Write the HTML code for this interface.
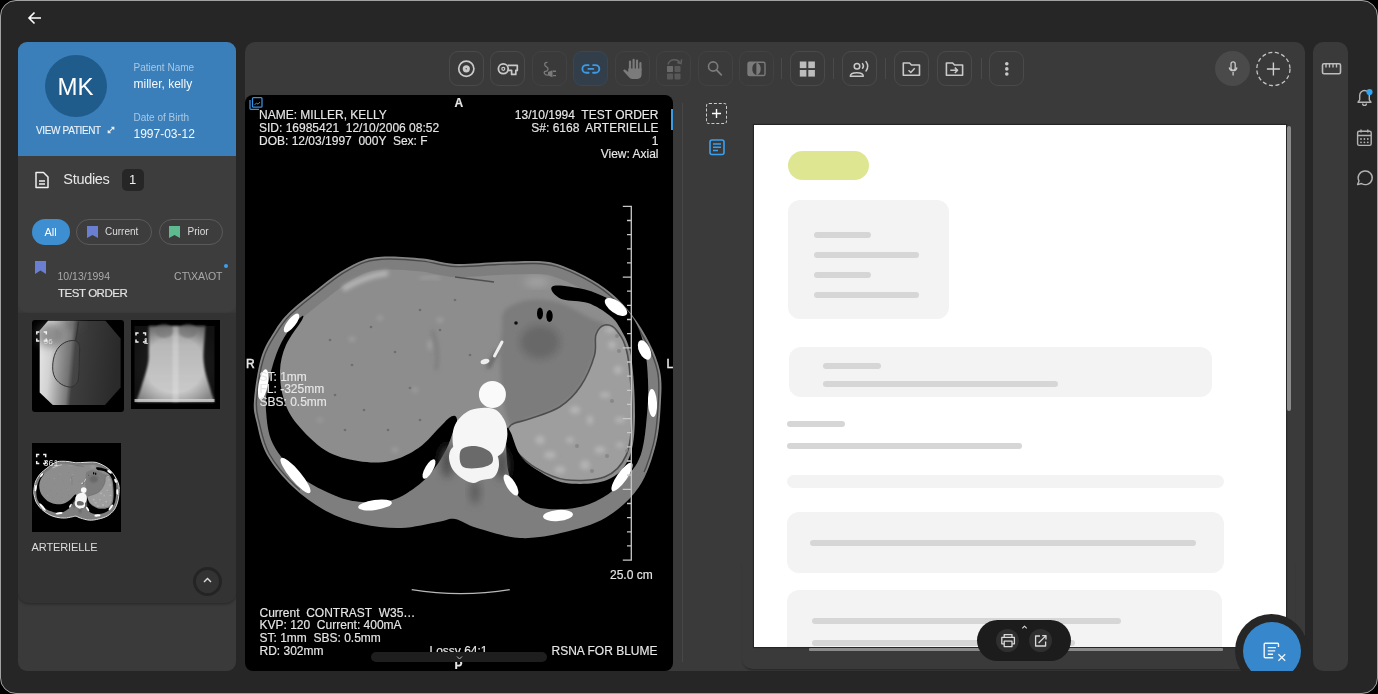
<!DOCTYPE html>
<html><head><meta charset="utf-8">
<style>
*{box-sizing:border-box;margin:0;padding:0}
html,body{width:1378px;height:694px;overflow:hidden;background:#000;font-family:"Liberation Sans",sans-serif}
body{will-change:transform}
.abs{position:absolute}
#frame{position:absolute;left:0;top:0;width:1378px;height:694px;border-radius:16px;background:#262626;border:1.5px solid #a2a2a2;overflow:hidden}
#frame2{position:absolute;left:-1.5px;top:-1.5px;width:1378px;height:694px}
.panel{position:absolute;background:#3a3a3a;border-radius:10px}
.tb{position:absolute;top:51px;width:35px;height:35px;border:1.2px solid #4a4a4a;border-radius:9px}
.sep{position:absolute;top:58px;width:1.6px;height:21px;background:#4a4a4a}
.vt{position:absolute;color:#e6e6e6;font-size:12px;line-height:12.8px;white-space:pre;-webkit-text-stroke:0.15px #e6e6e6}
.line{position:absolute;height:6px;border-radius:3px;background:#d6d6d6}
.card{position:absolute;background:#f3f3f3;border-radius:12px}
</style></head><body>
<div id="frame"><div id="frame2">

<!-- back arrow -->
<svg class="abs" style="left:26px;top:9px" width="18" height="18" viewBox="0 0 18 18"><path d="M15 9H3.5M8.5 3.5L3 9l5.5 5.5" stroke="#fff" stroke-width="1.6" fill="none"/></svg>

<!-- LEFT PANEL -->
<div class="abs" style="left:18px;top:42px;width:218px;height:629px;background:#3a3a3a;border-radius:9px;overflow:hidden">
  <div class="abs" style="left:0;top:0;width:218px;height:114px;background:#3a7fba"></div>
  <div class="abs" style="left:27px;top:13px;width:62px;height:62px;border-radius:50%;background:#1f5b8b;color:#fff;font-size:24px;text-align:center;line-height:63px">MK</div>
  <div class="abs" style="left:18.5px;top:83px;font-size:10px;color:#eef4fa;letter-spacing:-0.35px;-webkit-text-stroke:0.1px #eef4fa">VIEW PATIENT</div>
  <svg class="abs" style="left:89.5px;top:84.5px" width="8" height="8" viewBox="0 0 8 8"><path d="M1.2 6.8L6.8 1.2M4.3 1.2H6.8V3.7M1.2 4.3V6.8H3.7" stroke="#e8f0f8" stroke-width="1.1" fill="none"/></svg>
  <div class="abs" style="left:116px;top:20px;font-size:10px;color:#a9c8e3">Patient Name</div>
  <div class="abs" style="left:116px;top:35.5px;font-size:12px;color:#f4f8fb">miller, kelly</div>
  <div class="abs" style="left:116px;top:70.5px;font-size:10px;color:#a9c8e3">Date of Birth</div>
  <div class="abs" style="left:116px;top:85px;font-size:12px;color:#f4f8fb">1997-03-12</div>

  <!-- studies card -->
  <div class="abs" style="left:0;top:114px;width:218px;height:157px;background:#3d3d3d;border-radius:0 0 10px 10px"></div>
  <svg class="abs" style="left:16px;top:129px" width="16" height="18" viewBox="0 0 16 18"><path d="M2 1.5h7.5L14 6v10.5H2z" stroke="#eee" stroke-width="1.5" fill="none" stroke-linejoin="round"/><path d="M5 10h6M5 13h6" stroke="#eee" stroke-width="1.4"/></svg>
  <div class="abs" style="left:45.8px;top:129px;font-size:14.5px;letter-spacing:-0.3px;color:#e8e8e8">Studies</div>
  <div class="abs" style="left:104px;top:127px;width:22px;height:22px;border-radius:5px;background:#262626;color:#eee;font-size:13px;text-align:center;line-height:22px">1</div>

  <div class="abs" style="left:14px;top:177px;width:38px;height:26px;border-radius:13px;background:#3d8fd2;color:#fff;font-size:11px;text-align:center;line-height:26px">All</div>
  <div class="abs" style="left:58px;top:177px;width:76px;height:26px;border-radius:13px;border:1px solid #5a5a5a"></div>
  <svg class="abs" style="left:69px;top:184px" width="11" height="12" viewBox="0 0 11 12"><path d="M0 0h11v12L5.5 9 0 12z" fill="#6a7fd2"/></svg>
  <div class="abs" style="left:87.5px;top:184px;font-size:10px;color:#ddd">Current</div>
  <div class="abs" style="left:141px;top:177px;width:64px;height:26px;border-radius:13px;border:1px solid #5a5a5a"></div>
  <svg class="abs" style="left:151px;top:184px" width="11" height="12" viewBox="0 0 11 12"><path d="M0 0h11v12L5.5 9 0 12z" fill="#5dbb8f"/></svg>
  <div class="abs" style="left:170px;top:184px;font-size:10px;color:#ddd">Prior</div>

  <svg class="abs" style="left:17px;top:219px" width="11" height="13" viewBox="0 0 11 13"><path d="M0 0h11v13L5.5 9.5 0 13z" fill="#6a7fd2"/></svg>
  <div class="abs" style="left:206px;top:222px;width:4px;height:4px;border-radius:50%;background:#3aa0f0"></div>
  <div class="abs" style="left:40px;top:228px;font-size:10.5px;color:#aaa">10/13/1994</div>
  <div class="abs" style="left:150px;top:228px;width:55px;text-align:right;font-size:10.5px;color:#aaa">CT\XA\OT</div>
  <div class="abs" style="left:40.5px;top:245.5px;font-size:11.5px;color:#e4e4e4;letter-spacing:-0.45px;-webkit-text-stroke:0.15px #e4e4e4">TEST ORDER</div>

  <!-- thumbnails section -->
  <div class="abs" style="left:0;top:271px;width:218px;height:290px;background:#333333;border-radius:0 0 10px 10px;box-shadow:0 1px 3px rgba(0,0,0,.35)"></div>
  <div id="th1" class="abs" style="left:14px;top:278px;width:92px;height:92px;background:#000;border-radius:3px;overflow:hidden"><svg class="abs" style="left:0;top:0" width="92" height="92" viewBox="32 320 92 92">
<defs><linearGradient id="g1" x1="0" y1="0" x2="1" y2="0.1"><stop offset="0" stop-color="#e8e8e8"/><stop offset="0.17" stop-color="#d2d2d2"/><stop offset="0.3" stop-color="#a2a2a2"/><stop offset="0.41" stop-color="#7a7a7a"/><stop offset="0.47" stop-color="#3e3e3e"/><stop offset="1" stop-color="#2a2a2a"/></linearGradient>
<filter id="tb1"><feGaussianBlur stdDeviation="0.45"/></filter><filter id="tb3" x="-50%" y="-50%" width="200%" height="200%"><feGaussianBlur stdDeviation="4"/></filter></defs>
<path d="M48,320.8 H105.5 L120.6,338.5 V387.5 L105,405 H52.8 L39.7,392.5 V330.5 Z" fill="url(#g1)"/>
<ellipse cx="50" cy="335" rx="14" ry="12" fill="#555" fill-opacity="0.55" filter="url(#tb3)"/><ellipse cx="72" cy="324" rx="12" ry="5" fill="#555" fill-opacity="0.4" filter="url(#tb3)"/><path d="M61,345 C66,341 71,340 75.6,340.8 C79,342 80,346 79.5,352 C79,362 79.5,376 77.7,381.6 C75,386 72,387.5 69,387 C62,386 54,381 52.8,370.6 C52,360 55,350 61,345 Z M75.6,340.8 C77,334 78,328 78.4,322" fill="#606060" fill-opacity="0.25" stroke="#303030" stroke-width="1" filter="url(#tb1)"/>
<path d="M36.8,334.6 V332 H39.4 M43.699999999999996,332 H46.3 V334.6 M36.8,338.4 V341 H39.4 M46.3,338.4 V341 H43.699999999999996" stroke="#f2f2f2" stroke-width="1.5" fill="none"/>
<text x="43.8" y="343.6" font-family="Liberation Sans" font-size="8" fill="#ddd">96</text>
</svg></div>
  <div id="th2" class="abs" style="left:113px;top:278px;width:89px;height:89px;background:#000;overflow:hidden"><svg class="abs" style="left:0;top:0" width="89" height="89" viewBox="131 320 89 89">
<defs><linearGradient id="g2" x1="0" y1="0" x2="1" y2="0"><stop offset="0" stop-color="#8a8a8a"/><stop offset="0.3" stop-color="#c8c8c8"/><stop offset="0.5" stop-color="#e4e4e4"/><stop offset="0.7" stop-color="#c8c8c8"/><stop offset="1" stop-color="#8a8a8a"/></linearGradient>
<filter id="tb2"><feGaussianBlur stdDeviation="1.2"/></filter></defs>
<rect x="134.5" y="326" width="80" height="77" fill="#1a1a1a"/>
<defs><linearGradient id="g2v" x1="0" y1="0" x2="0" y2="1"><stop offset="0" stop-color="#959595"/><stop offset="0.25" stop-color="#b8b8b8"/><stop offset="1" stop-color="#cdcdcd"/></linearGradient>
<radialGradient id="g2s" cx="0.5" cy="0.5" r="0.6"><stop offset="0.6" stop-color="#000" stop-opacity="0"/><stop offset="1" stop-color="#000" stop-opacity="0.35"/></radialGradient></defs>
<path d="M148.7,326.3 H205.5 C204.5,340 203.4,350 203.4,358 C204,370 207,378 210,388 C212,395 213.5,399 214.4,401.7 H136.3 C137,399 139,394 141,388 C144,378 148,368 148.7,358 C148.7,350 148.7,340 148.7,326.3 Z" fill="url(#g2v)" filter="url(#tb2)"/>
<rect x="134" y="326" width="81" height="77" fill="url(#g2s)"/>
<rect x="172.5" y="326" width="6" height="76" fill="#eee" opacity="0.3" filter="url(#tb2)"/><ellipse cx="164" cy="331" rx="9" ry="7" fill="#707070" opacity="0.55" filter="url(#tb2)"/><ellipse cx="188" cy="331" rx="9" ry="7" fill="#707070" opacity="0.55" filter="url(#tb2)"/>
<rect x="134.5" y="399" width="80" height="3" fill="#ddd" opacity="0.7"/>
<path d="M136,335.6 V333 H138.6 M142.9,333 H145.5 V335.6 M136,339.4 V342 H138.6 M145.5,339.4 V342 H142.9" stroke="#f2f2f2" stroke-width="1.5" fill="none"/>
<text x="143.5" y="344" font-family="Liberation Sans" font-size="9" fill="#ddd">1</text>
</svg></div>
  <div id="th3" class="abs" style="left:14px;top:401px;width:89px;height:89px;background:#000;overflow:hidden"><svg class="abs" style="left:0;top:0" width="89" height="89" viewBox="245.4 169.5 425 425"><use href="#ctg"/><!--TH3RING--><path d="M254.0,400.0C253.2,410.7 254.3,412.8 256.5,422.0C258.7,431.2 260.9,444.2 267.0,455.0C273.1,465.8 283.2,477.7 293.0,487.0C302.8,496.3 314.5,504.8 326.0,511.0C337.5,517.2 349.5,521.2 362.0,524.0C374.5,526.8 388.3,528.3 401.0,528.0C413.7,527.7 429.0,523.5 438.0,522.0C447.0,520.5 448.5,518.0 455.0,519.0C461.5,520.0 466.2,524.8 477.0,528.0C487.8,531.2 505.7,537.2 520.0,538.0C534.3,538.8 548.7,536.0 563.0,532.6C577.3,529.2 593.3,525.1 606.0,517.5C618.7,509.9 630.7,499.2 639.0,487.0C647.3,474.8 652.3,458.5 656.0,444.0C659.7,429.5 660.3,412.2 661.0,400.0C661.7,387.8 661.9,380.5 660.0,371.0C658.1,361.5 654.2,352.3 649.5,343.0C644.8,333.7 638.4,323.3 632.0,315.0C625.6,306.7 618.8,299.5 611.0,293.0C603.2,286.5 594.0,280.8 585.0,276.0C576.0,271.2 565.3,266.5 557.0,264.0C548.7,261.5 544.8,261.3 535.0,261.0C525.2,260.7 511.3,261.5 498.0,262.0C484.7,262.5 467.5,264.6 455.0,264.0C442.5,263.4 434.2,259.9 423.0,258.6C411.8,257.4 397.8,256.3 388.0,256.5C378.2,256.7 372.3,257.2 364.5,259.7C356.7,262.2 349.2,266.4 341.0,271.6C332.8,276.8 323.7,284.2 315.0,291.0C306.3,297.8 295.8,305.8 289.0,312.6C282.2,319.4 278.7,324.4 274.0,332.0C269.3,339.6 264.3,346.7 261.0,358.0C257.7,369.3 254.8,389.3 254.0,400.0Z" fill="none" stroke="#e8e8e8" stroke-width="4.5"/><!--/TH3RING--></svg>
<svg class="abs" style="left:0;top:0" width="89" height="89" viewBox="32 443 89 89"><path d="M36.7,457.20000000000005 V454.6 H39.300000000000004 M43.1,454.6 H45.7 V457.20000000000005 M36.7,461.0 V463.6 H39.300000000000004 M45.7,461.0 V463.6 H43.1" stroke="#f2f2f2" stroke-width="1.5" fill="none"/><text x="43.5" y="466.3" font-family="Liberation Sans" font-size="9" fill="#ddd">361</text></svg></div>
  <div class="abs" style="left:14px;top:499.5px;font-size:11px;color:#ddd;letter-spacing:-0.1px">ARTERIELLE</div>
  <div class="abs" style="left:175px;top:525px;width:29px;height:29px;border-radius:50%;border:3px solid #242424"></div>
  <svg class="abs" style="left:185px;top:535px" width="9" height="6" viewBox="0 0 9 6"><path d="M1 5l3.5-3.5L8 5" stroke="#ddd" stroke-width="1.4" fill="none"/></svg>
</div>

<!-- RIGHT thin panel -->
<div class="panel" style="left:1313px;top:42px;width:35px;height:629px"></div>
<!-- MAIN PANEL -->
<div class="panel" style="left:245px;top:42px;width:1060px;height:629px"></div>

<!-- toolbar buttons -->
<div class="tb" style="left:449px"></div>
<div class="tb" style="left:490.5px"></div>
<div class="tb" style="left:532px;border-color:#424242"></div>
<div class="tb" style="left:573px;background:#323e49;border-color:#36475a"></div>
<div class="tb" style="left:615px;border-color:#424242"></div>
<div class="tb" style="left:656.5px;border-color:#424242"></div>
<div class="tb" style="left:698px;border-color:#424242"></div>
<div class="tb" style="left:739px;border-color:#424242"></div>
<div class="sep" style="left:781px"></div>
<div class="tb" style="left:790px"></div>
<div class="sep" style="left:833px"></div>
<div class="tb" style="left:842px"></div>
<div class="sep" style="left:885px"></div>
<div class="tb" style="left:894px"></div>
<div class="tb" style="left:937px"></div>
<div class="sep" style="left:981px"></div>
<div class="tb" style="left:989.5px"></div>

<div class="abs" style="left:1215.5px;top:51.5px;width:35px;height:35px;border-radius:50%;background:#4a4a4a"></div>
<svg class="abs" style="left:1255px;top:51px" width="37" height="37" viewBox="0 0 37 37"><circle cx="18.4" cy="18" r="16.6" fill="none" stroke="#c4c4c4" stroke-width="1.3" stroke-dasharray="4 2.6"/></svg>

<svg class="abs" style="left:0;top:0" width="1378" height="100" viewBox="0 0 1378 100">
<g fill="none" stroke="#c9c9c9" stroke-width="1.7">
<circle cx="466.3" cy="68.8" r="7.6"/>
</g>
<circle cx="466.3" cy="68.8" r="3.6" fill="#c9c9c9"/><circle cx="466.3" cy="68.8" r="0.8" fill="#555"/>
<path d="M507.8,65.4 H517.3 V70.4 H515.8 V74.4 H511.6 V70.4 H507.8" fill="none" stroke="#c9c9c9" stroke-width="1.7" stroke-linejoin="round"/>
<circle cx="503.3" cy="68.8" r="4.9" fill="none" stroke="#c9c9c9" stroke-width="1.8"/>
<circle cx="503.3" cy="68.8" r="1.5" fill="none" stroke="#c9c9c9" stroke-width="1.2"/>
<path d="M547.5,62.3 C544,62 543.8,65.5 546.5,66.8 C549,68 548.5,71.5 545,71.5 C543.5,71.5 544,75.5 548,75" fill="none" stroke="#7a7a7a" stroke-width="1.3"/>
<path d="M548,72 L552.5,70.2 V77.2 L548,75.5 Z" fill="#7a7a7a"/>
<path d="M553,71.3 H556 M553,75.6 H556" stroke="#7a7a7a" stroke-width="1.4"/>
<g fill="none" stroke="#3d9be6" stroke-width="1.9" stroke-linecap="round">
<path d="M588.6,65.1 H586.2 A3.8,3.8 0 0 0 586.2,72.7 H588.6"/>
<path d="M593.1,65.1 H595.5 A3.8,3.8 0 0 1 595.5,72.7 H593.1"/>
<path d="M588.4,68.9 H593.3"/>
</g>
<g fill="#7b7b7b"><path d="M628.2,72 L628.2,68.5 L641.6,68.5 L641.6,74.5 C641.6,77 640,78.9 637.5,78.9 H632.5 C630.8,78.9 629.8,78.2 628.8,77 L623.6,71.3 C622.8,70.3 623.8,69 625,69.6 Z"/></g>
<g stroke="#7b7b7b" stroke-width="2.2" stroke-linecap="round"><path d="M630,61.5 V70 M633.6,59.8 V70 M637,60.6 V70 M640.4,63.2 V70"/></g>
<g fill="#585858"><rect x="667" y="66" width="6" height="6" rx="0.8"/><rect x="674.5" y="66" width="6" height="6" rx="0.8"/><rect x="667" y="73.5" width="6" height="6" rx="0.8"/><rect x="674.5" y="73.5" width="6" height="6" rx="0.8"/></g>
<rect x="667" y="66" width="6" height="6" rx="0.8" fill="#6a6a6a"/>
<path d="M668,64.5 C669.5,59 677,58 680,62.5" fill="none" stroke="#5e5e5e" stroke-width="1.5"/>
<path d="M677.2,62.6 L681,63.6 L681.6,59.3" fill="none" stroke="#5e5e5e" stroke-width="1.5"/>
<circle cx="713.1" cy="66.5" r="4.6" fill="none" stroke="#7b7b7b" stroke-width="1.6"/>
<path d="M716.5,70 L721.3,74.8" stroke="#7b7b7b" stroke-width="1.8" stroke-linecap="round"/>
<rect x="748" y="62.3" width="17" height="13.2" rx="1.6" fill="none" stroke="#7b7b7b" stroke-width="1.4"/>
<path d="M748,62.3 H756.5 V75.5 H748 Z" fill="#7b7b7b"/>
<path d="M756.5,62.6 A6,6.6 0 0 0 756.5,75.2 Z" fill="#3a3a3a"/>
<path d="M756.5,62.6 A6,6.6 0 0 1 756.5,75.2 Z" fill="#7b7b7b"/>
<g fill="#bcbcbc"><rect x="799.8" y="61.5" width="6.6" height="6.6"/><rect x="808.3" y="61.5" width="6.6" height="6.6"/><rect x="799.8" y="70" width="6.6" height="6.6"/><rect x="808.3" y="70" width="6.6" height="6.6"/></g>
<g fill="none" stroke="#c9c9c9" stroke-width="1.5" stroke-linecap="round">
<circle cx="857" cy="66.3" r="2.8"/>
<path d="M850.3,76.2 C850.3,71.5 863.3,71.5 863.3,76.2 Z" stroke-linejoin="round"/>
<path d="M862.5,63.6 C863.6,65 863.6,67 862.5,68.3"/>
<path d="M866,61.6 C868.2,64.5 868.2,68 866,71"/>
</g>
<g fill="none" stroke="#c9c9c9" stroke-width="1.6" stroke-linejoin="round">
<path d="M903.3,63 H909.5 L911.5,65 H919.5 V75.2 H903.3 Z"/>
<path d="M908.5,70.3 L910.8,72.5 L914.7,68.3" stroke-width="1.5"/>
<path d="M946.4,63 H952.6 L954.6,65 H962.6 V75.2 H946.4 Z"/>
<path d="M950.3,70.3 H957.6 M954.8,67.6 L957.6,70.3 L954.8,73" stroke-width="1.5"/>
</g>
<g fill="#c9c9c9"><circle cx="1006.8" cy="63.8" r="1.8"/><circle cx="1006.8" cy="68.9" r="1.8"/><circle cx="1006.8" cy="74" r="1.8"/></g>
<rect x="1231" y="61.8" width="4.2" height="8.6" rx="2.1" fill="none" stroke="#c9c9c9" stroke-width="1.3"/>
<path d="M1229.2,67.5 a4,4 0 0 0 7.8,0 M1233.1,72 V75.5" fill="none" stroke="#c9c9c9" stroke-width="1.3"/>
<path d="M1273.4,62.5 V75.5 M1266.9,69 H1279.9" stroke="#cfcfcf" stroke-width="1.4"/>
<rect x="1322.5" y="63.8" width="18" height="10" rx="1.5" fill="none" stroke="#bdbdbd" stroke-width="1.6"/>
<path d="M1326,64 V67.5 M1329.5,64 V67.5 M1333,64 V67.5 M1336.5,64 V67.5" stroke="#bdbdbd" stroke-width="1.4"/>
</svg>
<!-- VIEWPORT -->
<div id="vp" class="abs" style="left:245px;top:95px;width:428px;height:576px;background:#000;border-radius:8px;overflow:hidden">
<!--CT_START--><svg class="abs" style="left:0;top:0" width="428" height="576" viewBox="245 95 428 576">
<defs><clipPath id="bc"><path d="M254.0,400.0C253.2,410.7 254.3,412.8 256.5,422.0C258.7,431.2 260.9,444.2 267.0,455.0C273.1,465.8 283.2,477.7 293.0,487.0C302.8,496.3 314.5,504.8 326.0,511.0C337.5,517.2 349.5,521.2 362.0,524.0C374.5,526.8 388.3,528.3 401.0,528.0C413.7,527.7 429.0,523.5 438.0,522.0C447.0,520.5 448.5,518.0 455.0,519.0C461.5,520.0 466.2,524.8 477.0,528.0C487.8,531.2 505.7,537.2 520.0,538.0C534.3,538.8 548.7,536.0 563.0,532.6C577.3,529.2 593.3,525.1 606.0,517.5C618.7,509.9 630.7,499.2 639.0,487.0C647.3,474.8 652.3,458.5 656.0,444.0C659.7,429.5 660.3,412.2 661.0,400.0C661.7,387.8 661.9,380.5 660.0,371.0C658.1,361.5 654.2,352.3 649.5,343.0C644.8,333.7 638.4,323.3 632.0,315.0C625.6,306.7 618.8,299.5 611.0,293.0C603.2,286.5 594.0,280.8 585.0,276.0C576.0,271.2 565.3,266.5 557.0,264.0C548.7,261.5 544.8,261.3 535.0,261.0C525.2,260.7 511.3,261.5 498.0,262.0C484.7,262.5 467.5,264.6 455.0,264.0C442.5,263.4 434.2,259.9 423.0,258.6C411.8,257.4 397.8,256.3 388.0,256.5C378.2,256.7 372.3,257.2 364.5,259.7C356.7,262.2 349.2,266.4 341.0,271.6C332.8,276.8 323.7,284.2 315.0,291.0C306.3,297.8 295.8,305.8 289.0,312.6C282.2,319.4 278.7,324.4 274.0,332.0C269.3,339.6 264.3,346.7 261.0,358.0C257.7,369.3 254.8,389.3 254.0,400.0Z"/></clipPath><clipPath id="spc"><path d="M605.0,325.0C608.5,324.4 613.2,326.0 617.0,331.0C620.8,336.0 625.1,340.8 627.6,355.0C630.1,369.2 632.3,399.2 632.0,416.0C631.7,432.8 630.5,445.5 626.0,455.6C621.5,465.7 615.1,472.7 605.0,476.7C594.9,480.7 577.2,481.2 565.6,479.7C554.0,478.2 543.8,472.6 535.4,467.6C527.0,462.7 519.6,455.1 515.0,450.0C510.4,444.9 508.7,441.2 508.0,437.0C507.3,432.8 507.5,428.0 511.0,425.0C514.5,422.0 520.9,422.0 529.0,419.0C537.1,416.0 551.0,412.5 559.6,407.0C568.2,401.5 574.9,394.6 580.7,386.0C586.5,377.4 591.9,364.2 594.4,355.6C596.9,347.0 594.2,339.6 596.0,334.5C597.8,329.4 601.5,325.6 605.0,325.0Z"/></clipPath>
<filter id="bl" x="-5%" y="-5%" width="110%" height="110%"><feGaussianBlur stdDeviation="0.7"/></filter>
<filter id="bl3" x="-100%" y="-100%" width="300%" height="300%"><feGaussianBlur stdDeviation="2.2"/></filter>
<filter id="bl2" x="-50%" y="-50%" width="200%" height="200%"><feGaussianBlur stdDeviation="4"/></filter></defs>
<g id="ctg"><g clip-path="url(#bc)"><g filter="url(#bl)">
<rect x="245" y="250" width="428" height="300" fill="#8d8d8d"/>
<path d="M254.0,400.0C253.2,410.7 254.3,412.8 256.5,422.0C258.7,431.2 260.9,444.2 267.0,455.0C273.1,465.8 283.2,477.7 293.0,487.0C302.8,496.3 314.5,504.8 326.0,511.0C337.5,517.2 349.5,521.2 362.0,524.0C374.5,526.8 388.3,528.3 401.0,528.0C413.7,527.7 429.0,523.5 438.0,522.0C447.0,520.5 448.5,518.0 455.0,519.0C461.5,520.0 466.2,524.8 477.0,528.0C487.8,531.2 505.7,537.2 520.0,538.0C534.3,538.8 548.7,536.0 563.0,532.6C577.3,529.2 593.3,525.1 606.0,517.5C618.7,509.9 630.7,499.2 639.0,487.0C647.3,474.8 652.3,458.5 656.0,444.0C659.7,429.5 660.3,412.2 661.0,400.0C661.7,387.8 661.9,380.5 660.0,371.0C658.1,361.5 654.2,352.3 649.5,343.0C644.8,333.7 638.4,323.3 632.0,315.0C625.6,306.7 618.8,299.5 611.0,293.0C603.2,286.5 594.0,280.8 585.0,276.0C576.0,271.2 565.3,266.5 557.0,264.0C548.7,261.5 544.8,261.3 535.0,261.0C525.2,260.7 511.3,261.5 498.0,262.0C484.7,262.5 467.5,264.6 455.0,264.0C442.5,263.4 434.2,259.9 423.0,258.6C411.8,257.4 397.8,256.3 388.0,256.5C378.2,256.7 372.3,257.2 364.5,259.7C356.7,262.2 349.2,266.4 341.0,271.6C332.8,276.8 323.7,284.2 315.0,291.0C306.3,297.8 295.8,305.8 289.0,312.6C282.2,319.4 278.7,324.4 274.0,332.0C269.3,339.6 264.3,346.7 261.0,358.0C257.7,369.3 254.8,389.3 254.0,400.0Z" fill="none" stroke="#7e7e7e" stroke-width="26"/>
<path d="M254.0,400.0C253.2,410.7 254.3,412.8 256.5,422.0C258.7,431.2 260.9,444.2 267.0,455.0C273.1,465.8 283.2,477.7 293.0,487.0C302.8,496.3 314.5,504.8 326.0,511.0C337.5,517.2 349.5,521.2 362.0,524.0C374.5,526.8 388.3,528.3 401.0,528.0C413.7,527.7 429.0,523.5 438.0,522.0C447.0,520.5 448.5,518.0 455.0,519.0C461.5,520.0 466.2,524.8 477.0,528.0C487.8,531.2 505.7,537.2 520.0,538.0C534.3,538.8 548.7,536.0 563.0,532.6C577.3,529.2 593.3,525.1 606.0,517.5C618.7,509.9 630.7,499.2 639.0,487.0C647.3,474.8 652.3,458.5 656.0,444.0C659.7,429.5 660.3,412.2 661.0,400.0C661.7,387.8 661.9,380.5 660.0,371.0C658.1,361.5 654.2,352.3 649.5,343.0C644.8,333.7 638.4,323.3 632.0,315.0C625.6,306.7 618.8,299.5 611.0,293.0C603.2,286.5 594.0,280.8 585.0,276.0C576.0,271.2 565.3,266.5 557.0,264.0C548.7,261.5 544.8,261.3 535.0,261.0C525.2,260.7 511.3,261.5 498.0,262.0C484.7,262.5 467.5,264.6 455.0,264.0C442.5,263.4 434.2,259.9 423.0,258.6C411.8,257.4 397.8,256.3 388.0,256.5C378.2,256.7 372.3,257.2 364.5,259.7C356.7,262.2 349.2,266.4 341.0,271.6C332.8,276.8 323.7,284.2 315.0,291.0C306.3,297.8 295.8,305.8 289.0,312.6C282.2,319.4 278.7,324.4 274.0,332.0C269.3,339.6 264.3,346.7 261.0,358.0C257.7,369.3 254.8,389.3 254.0,400.0Z" fill="none" stroke="#4a4a4a" stroke-width="6.4"/>
<path d="M254.0,400.0C253.2,410.7 254.3,412.8 256.5,422.0C258.7,431.2 260.9,444.2 267.0,455.0C273.1,465.8 283.2,477.7 293.0,487.0C302.8,496.3 314.5,504.8 326.0,511.0C337.5,517.2 349.5,521.2 362.0,524.0C374.5,526.8 388.3,528.3 401.0,528.0C413.7,527.7 429.0,523.5 438.0,522.0C447.0,520.5 448.5,518.0 455.0,519.0C461.5,520.0 466.2,524.8 477.0,528.0C487.8,531.2 505.7,537.2 520.0,538.0C534.3,538.8 548.7,536.0 563.0,532.6C577.3,529.2 593.3,525.1 606.0,517.5C618.7,509.9 630.7,499.2 639.0,487.0C647.3,474.8 652.3,458.5 656.0,444.0C659.7,429.5 660.3,412.2 661.0,400.0C661.7,387.8 661.9,380.5 660.0,371.0C658.1,361.5 654.2,352.3 649.5,343.0C644.8,333.7 638.4,323.3 632.0,315.0C625.6,306.7 618.8,299.5 611.0,293.0C603.2,286.5 594.0,280.8 585.0,276.0C576.0,271.2 565.3,266.5 557.0,264.0C548.7,261.5 544.8,261.3 535.0,261.0C525.2,260.7 511.3,261.5 498.0,262.0C484.7,262.5 467.5,264.6 455.0,264.0C442.5,263.4 434.2,259.9 423.0,258.6C411.8,257.4 397.8,256.3 388.0,256.5C378.2,256.7 372.3,257.2 364.5,259.7C356.7,262.2 349.2,266.4 341.0,271.6C332.8,276.8 323.7,284.2 315.0,291.0C306.3,297.8 295.8,305.8 289.0,312.6C282.2,319.4 278.7,324.4 274.0,332.0C269.3,339.6 264.3,346.7 261.0,358.0C257.7,369.3 254.8,389.3 254.0,400.0Z" fill="none" stroke="#858585" stroke-width="3.6"/>
<path d="M300,470 L340,495 392,500 418,485 434,469 446,450 455,430 470,440 505,440 507,470 515,492 546,509 576,508 602,498 640,470 660,480 640,548 300,548Z" fill="#7e7e7e"/>
<path d="M505.0,310.0C509.7,305.0 520.8,301.2 530.0,300.0C539.2,298.8 550.0,300.0 560.0,303.0C570.0,306.0 582.5,314.3 590.0,318.0C597.5,321.7 604.0,322.2 605.0,325.0C606.0,327.8 597.8,329.4 596.0,334.5C594.2,339.6 596.9,347.0 594.4,355.6C591.9,364.2 586.5,377.4 580.7,386.0C574.9,394.6 568.2,401.5 559.6,407.0C551.0,412.5 537.1,416.0 529.0,419.0C520.9,422.0 515.3,428.2 511.0,425.0C506.7,421.8 504.8,410.8 503.0,400.0C501.2,389.2 500.2,371.7 500.0,360.0C499.8,348.3 501.2,338.3 502.0,330.0C502.8,321.7 500.3,315.0 505.0,310.0Z" fill="#7c7c7c" filter="url(#bl3)"/>
<ellipse cx="540" cy="342" rx="20" ry="17" fill="#686868" filter="url(#bl2)"/>
<path d="M605.0,325.0C608.5,324.4 613.2,326.0 617.0,331.0C620.8,336.0 625.1,340.8 627.6,355.0C630.1,369.2 632.3,399.2 632.0,416.0C631.7,432.8 630.5,445.5 626.0,455.6C621.5,465.7 615.1,472.7 605.0,476.7C594.9,480.7 577.2,481.2 565.6,479.7C554.0,478.2 543.8,472.6 535.4,467.6C527.0,462.7 519.6,455.1 515.0,450.0C510.4,444.9 508.7,441.2 508.0,437.0C507.3,432.8 507.5,428.0 511.0,425.0C514.5,422.0 520.9,422.0 529.0,419.0C537.1,416.0 551.0,412.5 559.6,407.0C568.2,401.5 574.9,394.6 580.7,386.0C586.5,377.4 591.9,364.2 594.4,355.6C596.9,347.0 594.2,339.6 596.0,334.5C597.8,329.4 601.5,325.6 605.0,325.0Z" fill="#9e9e9e" stroke="#4e4e4e" stroke-width="1.6"/><g clip-path="url(#spc)"><ellipse cx="612" cy="345" rx="3.7" ry="3.9" fill="#b4b4b4" filter="url(#bl3)"/><ellipse cx="618" cy="370" rx="4.1" ry="4.0" fill="#b4b4b4" filter="url(#bl3)"/><ellipse cx="605" cy="395" rx="4.9" ry="2.7" fill="#b4b4b4" filter="url(#bl3)"/><ellipse cx="590" cy="420" rx="3.0" ry="4.6" fill="#b4b4b4" filter="url(#bl3)"/><ellipse cx="570" cy="440" rx="3.8" ry="3.1" fill="#b4b4b4" filter="url(#bl3)"/><ellipse cx="550" cy="455" rx="6.0" ry="3.7" fill="#b4b4b4" filter="url(#bl3)"/><ellipse cx="600" cy="450" rx="5.5" ry="3.7" fill="#b4b4b4" filter="url(#bl3)"/><ellipse cx="620" cy="420" rx="4.9" ry="2.9" fill="#b4b4b4" filter="url(#bl3)"/><ellipse cx="585" cy="465" rx="4.9" ry="4.7" fill="#b4b4b4" filter="url(#bl3)"/><ellipse cx="540" cy="440" rx="4.6" ry="4.4" fill="#b4b4b4" filter="url(#bl3)"/><ellipse cx="610" cy="330" rx="5.0" ry="2.7" fill="#b4b4b4" filter="url(#bl3)"/><ellipse cx="575" cy="410" rx="5.3" ry="4.0" fill="#b4b4b4" filter="url(#bl3)"/><ellipse cx="620" cy="445" rx="3.9" ry="2.6" fill="#b4b4b4" filter="url(#bl3)"/><ellipse cx="560" cy="470" rx="5.6" ry="3.7" fill="#b4b4b4" filter="url(#bl3)"/><circle cx="619" cy="351" r="2" fill="#888" filter="url(#bl)"/><circle cx="612" cy="401" r="2" fill="#888" filter="url(#bl)"/><circle cx="577" cy="446" r="2" fill="#888" filter="url(#bl)"/><circle cx="607" cy="456" r="2" fill="#888" filter="url(#bl)"/><circle cx="592" cy="471" r="2" fill="#888" filter="url(#bl)"/><circle cx="617" cy="336" r="2" fill="#888" filter="url(#bl)"/><circle cx="627" cy="451" r="2" fill="#888" filter="url(#bl)"/></g>
<path d="M343,289 Q365,276 388,273" stroke="#b8b8b8" stroke-width="5" fill="none" filter="url(#bl3)"/><path d="M420,279 Q430,275 440,279" stroke="#9a9a9a" stroke-width="4" fill="none" filter="url(#bl3)"/>
<ellipse cx="537" cy="282" rx="13" ry="4" fill="#a8a8a8" filter="url(#bl2)"/>
<path d="M455,277 L494,282" stroke="#505050" stroke-width="1.5"/>
<circle cx="330" cy="340" r="1.3" fill="#6e6e6e"/><circle cx="352" cy="365" r="1.3" fill="#6e6e6e"/><circle cx="371" cy="327" r="1.3" fill="#6e6e6e"/><circle cx="395" cy="352" r="1.3" fill="#6e6e6e"/><circle cx="410" cy="388" r="1.3" fill="#6e6e6e"/><circle cx="335" cy="395" r="1.3" fill="#6e6e6e"/><circle cx="364" cy="410" r="1.3" fill="#6e6e6e"/><circle cx="440" cy="330" r="1.3" fill="#6e6e6e"/><circle cx="470" cy="355" r="1.3" fill="#6e6e6e"/><circle cx="455" cy="300" r="1.3" fill="#6e6e6e"/><circle cx="420" cy="310" r="1.3" fill="#6e6e6e"/><circle cx="300" cy="380" r="1.3" fill="#6e6e6e"/><circle cx="388" cy="430" r="1.3" fill="#6e6e6e"/><circle cx="345" cy="430" r="1.3" fill="#6e6e6e"/><circle cx="420" cy="420" r="1.3" fill="#6e6e6e"/><path d="M497,351 L488,368" stroke="#555" stroke-width="3" filter="url(#bl3)"/><path d="M502,342 L494.5,356" stroke="#eee" stroke-width="3" stroke-linecap="round"/><ellipse cx="485" cy="361.5" rx="4.5" ry="2.5" transform="rotate(-15 485 361.5)" fill="#eee"/><ellipse cx="352" cy="339" rx="3" ry="2" fill="#a5a5a5" filter="url(#bl3)"/><ellipse cx="380" cy="318" rx="2.5" ry="2" fill="#a5a5a5" filter="url(#bl3)"/><ellipse cx="430" cy="345" rx="2" ry="5" fill="#a5a5a5" filter="url(#bl3)"/><ellipse cx="440" cy="320" rx="3" ry="2" fill="#a5a5a5" filter="url(#bl3)"/><ellipse cx="415" cy="390" rx="2.5" ry="2" fill="#a5a5a5" filter="url(#bl3)"/><ellipse cx="320" cy="420" rx="2" ry="2" fill="#a5a5a5" filter="url(#bl3)"/><ellipse cx="395" cy="450" rx="3" ry="2" fill="#a5a5a5" filter="url(#bl3)"/><path d="M432,330 Q440,350 436,370" stroke="#7a7a7a" stroke-width="3" fill="none" filter="url(#bl3)"/><path d="M301.0,317.0C298.5,319.2 291.2,326.7 287.0,333.0C282.8,339.3 279.2,346.3 276.0,355.0C272.8,363.7 269.7,375.8 268.0,385.0C266.3,394.2 265.2,400.2 266.0,410.0C266.8,419.8 267.4,433.0 273.0,444.0C278.6,455.0 289.2,467.3 299.7,476.0C310.2,484.7 325.6,491.7 336.0,496.0C346.4,500.3 352.6,501.3 362.0,502.0C371.4,502.7 383.2,502.8 392.6,500.0C402.0,497.2 411.6,490.2 418.5,485.0C425.4,479.8 429.4,474.8 434.0,469.0C438.6,463.2 442.8,456.2 446.0,450.0C449.2,443.8 451.2,436.8 453.0,432.0C454.8,427.2 456.7,423.7 457.0,421.0C457.3,418.3 456.3,416.5 455.0,416.0C453.7,415.5 451.5,416.2 449.0,418.0C446.5,419.8 445.1,422.0 440.0,427.0C434.9,432.0 426.8,442.3 418.5,448.0C410.2,453.7 400.1,458.8 390.0,461.0C379.9,463.2 368.7,462.8 358.0,461.0C347.3,459.2 335.8,456.7 325.6,450.5C315.4,444.3 303.9,432.4 297.0,424.0C290.1,415.6 286.8,408.8 284.0,400.0C281.2,391.2 279.7,380.2 280.0,371.0C280.3,361.8 282.3,353.5 286.0,345.0C289.7,336.5 299.5,324.7 302.0,320.0C304.5,315.3 303.5,314.8 301.0,317.0Z" fill="#000"/>
<path d="M552.0,291.0C550.8,288.7 550.5,285.8 556.0,285.5C561.5,285.2 576.5,287.4 585.0,289.5C593.5,291.6 600.5,295.1 607.0,298.0C613.5,300.9 619.0,302.5 624.0,307.0C629.0,311.5 633.5,317.8 637.0,325.0C640.5,332.2 643.2,340.8 645.0,350.0C646.8,359.2 647.6,369.7 648.0,380.0C648.4,390.3 648.5,399.1 647.3,411.6C646.1,424.1 644.8,443.3 640.8,454.8C636.8,466.3 630.0,473.6 623.5,480.8C617.0,488.0 609.9,493.5 602.0,498.0C594.1,502.5 585.3,506.0 576.0,507.8C566.7,509.6 554.3,509.7 546.0,508.8C537.7,507.9 531.1,505.3 526.0,502.4C520.9,499.5 518.5,497.0 515.5,491.6C512.5,486.2 509.6,478.6 508.0,470.0C506.4,461.4 506.2,447.0 506.0,440.0C505.8,433.0 506.2,429.2 507.0,428.0C507.8,426.8 508.8,428.5 511.0,433.0C513.2,437.5 515.7,448.8 520.0,455.0C524.3,461.2 529.3,465.3 537.0,470.0C544.7,474.7 554.3,481.3 566.0,483.0C577.7,484.7 596.5,484.2 607.0,480.0C617.5,475.8 624.3,468.7 629.0,458.0C633.7,447.3 634.7,433.0 635.0,416.0C635.3,399.0 633.5,370.7 631.0,356.0C628.5,341.3 623.7,334.8 620.0,328.0C616.3,321.2 614.3,319.2 609.0,315.0C603.7,310.8 595.7,305.6 588.0,303.0C580.3,300.4 569.0,301.5 563.0,299.5C557.0,297.5 553.2,293.3 552.0,291.0Z" fill="#000"/>
<ellipse cx="447" cy="462" rx="6" ry="16" fill="#505050" filter="url(#bl2)"/><ellipse cx="502" cy="465" rx="6" ry="15" fill="#505050" filter="url(#bl2)"/><ellipse cx="475" cy="492" rx="5" ry="12" fill="#5a5a5a" filter="url(#bl2)"/>
<path d="M452.0,448.0C454.2,445.7 457.7,444.8 462.0,444.0C466.3,443.2 472.5,441.7 478.0,443.0C483.5,444.3 491.5,448.3 495.0,452.0C498.5,455.7 499.2,460.8 499.0,465.0C498.8,469.2 496.8,474.5 494.0,477.0C491.2,479.5 485.5,479.0 482.0,480.0C478.5,481.0 476.2,483.2 473.0,483.0C469.8,482.8 466.3,481.2 463.0,479.0C459.7,476.8 455.3,473.5 453.0,470.0C450.7,466.5 449.2,461.7 449.0,458.0C448.8,454.3 449.8,450.3 452.0,448.0Z" fill="#f4f4f4"/>
<path d="M470.0,410.3C476.2,407.5 486.8,407.0 492.4,408.4C498.0,409.8 501.2,414.5 503.7,418.7C506.2,422.9 507.4,428.4 507.4,433.7C507.4,439.0 505.6,446.6 503.7,450.6C501.8,454.7 498.3,455.6 496.0,458.0C493.7,460.4 496.0,464.7 490.0,465.0C484.0,465.3 466.2,463.3 460.0,460.0C453.8,456.7 453.8,450.8 453.0,445.0C452.2,439.2 452.2,430.8 455.0,425.0C457.8,419.2 463.8,413.1 470.0,410.3Z" fill="#f6f6f6"/>
<path d="M461.0,450.0C463.2,446.7 470.2,445.7 475.0,446.0C479.8,446.3 487.2,449.2 490.0,452.0C492.8,454.8 494.0,460.3 492.0,463.0C490.0,465.7 483.0,467.5 478.0,468.0C473.0,468.5 464.8,469.0 462.0,466.0C459.2,463.0 458.8,453.3 461.0,450.0Z" fill="#6a6a6a"/>
<circle cx="492.4" cy="394.4" r="13.5" fill="#fafafa"/>
<ellipse cx="540" cy="313.5" rx="3" ry="6" fill="#000"/><ellipse cx="549.5" cy="316" rx="3.2" ry="6" fill="#000"/><circle cx="516" cy="323" r="1.8" fill="#111"/>
<ellipse cx="291.5" cy="323" rx="11.5" ry="4.2" transform="rotate(-52 291.5 323)" fill="#fff"/><ellipse cx="263.2" cy="384.5" rx="4.6" ry="15.5" transform="rotate(10 263.2 384.5)" fill="#fff"/><ellipse cx="295.5" cy="475.5" rx="22.5" ry="5.5" transform="rotate(50 295.5 475.5)" fill="#fff"/><ellipse cx="375" cy="505" rx="17" ry="5" transform="rotate(-8 375 505)" fill="#fff"/><ellipse cx="429" cy="469" rx="11" ry="4" transform="rotate(-60 429 469)" fill="#fff"/><ellipse cx="616" cy="307" rx="13" ry="6" transform="rotate(35 616 307)" fill="#fff"/><ellipse cx="644.5" cy="350" rx="5.5" ry="10.5" transform="rotate(-25 644.5 350)" fill="#fff"/><ellipse cx="652.5" cy="403" rx="4.5" ry="14" transform="rotate(-3 652.5 403)" fill="#fff"/><ellipse cx="622" cy="477" rx="17" ry="5" transform="rotate(-55 622 477)" fill="#fff"/><ellipse cx="558" cy="515.5" rx="15" ry="5.5" transform="rotate(-5 558 515.5)" fill="#fff"/><ellipse cx="511" cy="485" rx="12" ry="4.5" transform="rotate(58 511 485)" fill="#fff"/>
</g></g></g>
<path d="M411.7,589.7 Q460.8,597.5 509.8,589.7" stroke="#b8b8b8" stroke-width="1.3" fill="none"/>
</svg><!--CT_END-->
<svg class="abs" style="left:0;top:0" width="428" height="576" viewBox="245 95 428 576"><g stroke="#c8c8c8" stroke-width="1.3" fill="none" id="scale"><path d="M622.8,206.3 H631.3 V560.1 H622.8 M627,220.5 H631.3 M627,234.6 H631.3 M627,248.8 H631.3 M627,262.9 H631.3 M622.8,277.1 H631.3 M627,291.2 H631.3 M627,305.4 H631.3 M627,319.5 H631.3 M627,333.7 H631.3 M622.8,347.8 H631.3 M627,362.0 H631.3 M627,376.1 H631.3 M627,390.3 H631.3 M627,404.4 H631.3 M622.8,418.6 H631.3 M627,432.7 H631.3 M627,446.9 H631.3 M627,461.0 H631.3 M627,475.2 H631.3 M622.8,489.3 H631.3 M627,503.5 H631.3 M627,517.6 H631.3 M627,531.8 H631.3 M627,545.9 H631.3"/></g></svg>
<div class="vt" style="left:14.5px;top:14.5px">NAME: MILLER, KELLY
SID: 16985421  12/10/2006 08:52
DOB: 12/03/1997  000Y  Sex: F</div>
<div class="vt" style="right:14px;top:14.8px;text-align:right">13/10/1994  TEST ORDER
S#: 6168  ARTERIELLE
1
View: Axial</div>
<div class="vt" style="left:210px;top:2px;font-weight:bold">A</div>
<div class="vt" style="left:1.5px;top:263px;-webkit-text-stroke:0.5px #e6e6e6">R</div>
<div class="vt" style="left:422px;top:263px;-webkit-text-stroke:0.4px #e6e6e6">L</div>
<div class="vt" style="left:15px;top:276px">ST: 1mm
FL: -325mm
SBS: 0.5mm</div>
<div class="vt" style="left:365.5px;top:474px">25.0 cm</div>
<div class="vt" style="left:15px;top:512px">Current  CONTRAST  W35…
KVP: 120  Current: 400mA
ST: 1mm  SBS: 0.5mm
RD: 302mm</div>
<div class="vt" style="left:185px;top:550px">Lossy 64:1</div>
<div class="vt" style="right:15px;top:550px">RSNA FOR BLUME</div>
<div class="vt" style="left:210px;top:564px;font-weight:bold">P</div>
<div class="abs" style="left:126px;top:557px;width:176px;height:10px;border-radius:5px;background:#1e1e1e"></div>
<svg class="abs" style="left:210px;top:560px" width="9" height="6" viewBox="0 0 9 6"><path d="M2,1.5 L4.5,4 L7,1.5" stroke="#bbb" stroke-width="1" fill="none"/></svg>
<svg class="abs" style="left:4px;top:2px" width="14" height="13" viewBox="0 0 14 13"><rect x="3.5" y="0.7" width="9.5" height="9.5" rx="1" stroke="#3b8fd8" stroke-width="1.3" fill="none"/><path d="M1,3 V11.5 a0.8,0.8 0 0 0 0.8,0.8 H10" stroke="#3b8fd8" stroke-width="1.3" fill="none"/><path d="M5.5,8 l2,-2 1.5,1.2 2,-2.2" stroke="#3b8fd8" stroke-width="1" fill="none"/></svg>
<div class="abs" style="left:426px;top:14px;width:2px;height:21px;background:#3d9be6"></div>
</div>

<!-- report side -->
<div class="abs" style="left:682px;top:103px;width:1px;height:559px;background:#474747"></div>
<div class="abs" style="left:706px;top:103px;width:21px;height:21px;border:1.2px dashed #ccc;border-radius:3px"></div>
<svg class="abs" style="left:709px;top:106px" width="15" height="15" viewBox="0 0 15 15"><path d="M7.5 3v9M3 7.5h9" stroke="#fff" stroke-width="1.4"/></svg>
<svg class="abs" style="left:709px;top:139px" width="16" height="17" viewBox="0 0 16 17"><rect x="1" y="1" width="14" height="14.5" rx="2" stroke="#3aa0f0" stroke-width="1.6" fill="none"/><path d="M4 5h8M4 8.3h8M4 11.6h5" stroke="#3aa0f0" stroke-width="1.5"/></svg>

<div class="abs" style="left:742px;top:560px;width:553px;height:109px;background:#3a3a3a;border-radius:0 0 10px 10px;box-shadow:0 2px 2px -1px rgba(0,0,0,.4)"></div>
<div id="doc" class="abs" style="left:754px;top:125px;width:532px;height:522px;background:#fff;overflow:hidden;box-shadow:0 0 1px 1px rgba(0,0,0,.35)">
  <div class="abs" style="left:34px;top:26px;width:81px;height:29px;border-radius:15px;background:#dfe692"></div>
  <div class="card" style="left:34px;top:75px;width:161px;height:119px"></div>
  <div class="line" style="left:60px;top:107px;width:57px"></div>
  <div class="line" style="left:60px;top:127px;width:105px"></div>
  <div class="line" style="left:60px;top:147px;width:57px"></div>
  <div class="line" style="left:60px;top:167px;width:105px"></div>
  <div class="card" style="left:35px;top:222px;width:423px;height:50px"></div>
  <div class="line" style="left:69px;top:238px;width:58px"></div>
  <div class="line" style="left:69px;top:256px;width:235px"></div>
  <div class="line" style="left:33px;top:296px;width:58px"></div>
  <div class="line" style="left:33px;top:318px;width:235px"></div>
  <div class="abs" style="left:33px;top:350px;width:437px;height:13px;border-radius:7px;background:#f3f3f3"></div>
  <div class="card" style="left:33px;top:387px;width:437px;height:61px"></div>
  <div class="line" style="left:56px;top:415px;width:386px"></div>
  <div class="card" style="left:33px;top:465px;width:435px;height:80px"></div>
  <div class="line" style="left:58px;top:493px;width:309px"></div>
  <div class="line" style="left:58px;top:515px;width:263px"></div>
</div>
<div class="abs" style="left:1287.5px;top:126.5px;width:3.5px;height:285px;background:#8a8a8a;border-radius:2px"></div>
<div class="abs" style="left:809px;top:648px;width:414px;height:3px;background:#8a8a8a;border-radius:1px"></div>

<div class="abs" style="left:977.5px;top:620px;width:94px;height:41px;border-radius:21px;background:#1c1c1c"></div>
<div class="abs" style="left:996.5px;top:629px;width:23px;height:23px;border-radius:50%;background:#2f2f2f"></div>
<div class="abs" style="left:1029.5px;top:629px;width:23px;height:23px;border-radius:50%;background:#2f2f2f"></div>

<!-- FAB -->
<div class="abs" style="left:1235.5px;top:614px;width:73px;height:73px;border-radius:50%;background:#262626"></div>
<div class="abs" style="left:1243px;top:622px;width:58px;height:58px;border-radius:50%;background:#3787cc"></div>
<div class="abs" style="left:1230px;top:671px;width:90px;height:25px;background:#262626"></div>

<svg class="abs" style="left:0;top:0" width="1378" height="694" viewBox="0 0 1378 694" pointer-events="none">
<g fill="none" stroke="#b3b3b3" stroke-width="1.4" stroke-linejoin="round">
<path d="M1358,102.2 H1371 L1369.3,99.8 V95.5 A4.8,5 0 0 0 1359.7,95.5 V99.8 Z"/>
<path d="M1362.6,103.5 A1.9,1.9 0 0 0 1366.4,103.5"/>
<rect x="1357.6" y="131.2" width="13.6" height="14.2" rx="1.6"/>
<path d="M1357.6,135.5 H1371.2 M1361,129.4 V132.4 M1367.8,129.4 V132.4"/>
<path d="M1364.4,171 A7,6.8 0 1 1 1361.5,183.5 L1357.6,184.6 L1359,181 A7,6.8 0 0 1 1364.4,171 Z"/>
</g>
<g fill="#b3b3b3"><circle cx="1361" cy="139" r="0.9"/><circle cx="1364.4" cy="139" r="0.9"/><circle cx="1367.8" cy="139" r="0.9"/><circle cx="1361" cy="142.3" r="0.9"/><circle cx="1364.4" cy="142.3" r="0.9"/><circle cx="1367.8" cy="142.3" r="0.9"/></g>
<circle cx="1369.5" cy="92" r="3.1" fill="#2ea6f5"/>
<g fill="none" stroke="#f2f7fc" stroke-width="1.4">
<path d="M1278.5,647 V644.2 A1,1 0 0 0 1277.5,643.2 H1265.2 A1,1 0 0 0 1264.2,644.2 V656.8 A1,1 0 0 0 1265.2,657.8 H1273.2"/>
<path d="M1267.8,647.6 H1276 M1267.8,650.9 H1275.2 M1267.8,654.2 H1273"/>
<path d="M1278.4,654.2 L1285.2,660.7 M1285.2,654.2 L1278.4,660.7" stroke-width="1.2"/>
</g>
<g fill="none" stroke="#d9d9d9" stroke-width="1.3" stroke-linejoin="round">
<path d="M1004.2,637 V634.6 H1012 V637"/>
<path d="M1004,643.8 H1001.8 V637.4 H1014.4 V643.8 H1012.2"/>
<rect x="1004.2" y="641.2" width="7.8" height="5.4"/>
<path d="M1045.6,641.5 V646 H1035.6 V636 H1040"/>
<path d="M1038.6,643 L1046,635.6 M1042.2,635.6 H1046 V639.4"/>
<path d="M1022.3,628.3 L1024.5,626.2 L1026.7,628.3" stroke-width="1.1"/>
</g>
</svg>

</div></div>
</body></html>
